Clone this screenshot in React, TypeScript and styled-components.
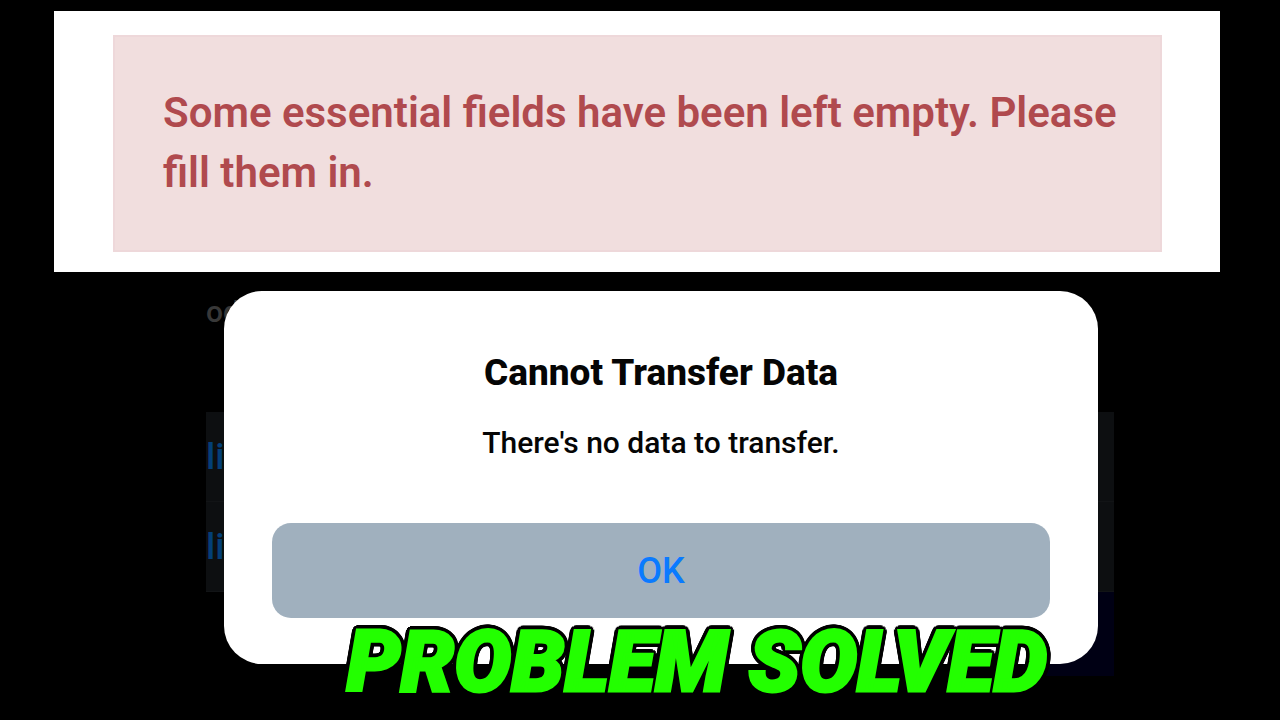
import React from "react";
import styled, { createGlobalStyle } from "styled-components";

const GlobalStyle = createGlobalStyle`
  *, *::before, *::after { box-sizing: border-box; }
  body { margin: 0; background: #000; font-family: Roboto, "Liberation Sans", sans-serif; }
  h1, h2, p { margin: 0; }
`;

const Page = styled.main`
  position: relative;
  min-height: 100vh;
  padding-top: 11px;
  background: #000;
  overflow: hidden;
`;

const Banner = styled.section`
  margin: 0 60px 0 54px;
  padding: 24px 58px 20px 59px;
  background: #fff;
`;

const Alert = styled.p`
  padding: 46px 36px 47px 48px;
  border: 2px solid #eed8da;
  background: #f1dede;
  color: #b04a4e;
  font-size: 42px;
  font-weight: 600;
  line-height: 60px;
`;

const Stage = styled.section`
  display: grid;
  margin: 0 166px 0 206px;
`;

const Backdrop = styled.div`
  grid-area: 1 / 1;
  display: flex;
  flex-direction: column;
  overflow: hidden;
`;

const Heading = styled.p`
  height: 140px;
  padding-top: 20px;
  color: #383838;
  font-size: 30px;
  font-weight: 500;
  line-height: 40px;
`;

const Row = styled.a`
  display: flex;
  align-items: center;
  height: 90px;
  border-bottom: 1px solid #121416;
  background: #0d0f11;
  color: #043f78;
  font-size: 36px;
  font-weight: 500;
  text-decoration: none;
`;

const Footer = styled.div`
  align-self: flex-end;
  width: 10%;
  height: 84px;
  background: #000014;
`;

const Dialog = styled.div`
  grid-area: 1 / 1;
  align-self: start;
  z-index: 1;
  display: flex;
  flex-direction: column;
  margin: 19px 16px 0 18px;
  padding: 60px 48px 46px;
  border-radius: 38px;
  background: #fff;
  color: #050505;
  text-align: center;
`;

const Title = styled.h1`
  font-size: 37px;
  font-weight: 800;
  line-height: 44px;
`;

const Message = styled.p`
  margin-top: 28px;
  font-size: 30px;
  font-weight: 500;
  line-height: 40px;
`;

const OkButton = styled.button`
  height: 95px;
  margin-top: 60px;
  padding: 0;
  border: 0;
  border-radius: 19px;
  background: #a0b0be;
  color: #0a7aff;
  font-family: inherit;
  font-size: 36px;
  font-weight: 500;
`;

const Caption = styled.h2`
  position: absolute;
  top: 612px;
  left: 0;
  right: 0;
  z-index: 2;
  padding-left: 114px;
  color: #23ff00;
  font-size: 85px;
  font-style: italic;
  font-weight: 900;
  line-height: 100px;
  text-align: center;
  white-space: nowrap;
  -webkit-text-stroke: 3px #23ff00;
  text-shadow:
    5px 0 #000, -5px 0 #000, 0 5px #000, 0 -5px #000,
    4px 3px #000, -4px 3px #000, 4px -3px #000, -4px -3px #000,
    3px 4px #000, -3px 4px #000, 3px -4px #000, -3px -4px #000,
    5px 1px #000, -5px 1px #000, 5px -1px #000, -5px -1px #000,
    1px 5px #000, -1px 5px #000, 1px -5px #000, -1px -5px #000;
`;

export default function App() {
  return (
    <Page>
      <GlobalStyle />
      <Banner>
        <Alert role="alert">
          Some essential fields have been left empty. Please fill them in.
        </Alert>
      </Banner>
      <Stage>
        <Backdrop>
          <Heading>od</Heading>
          <Row href="#first">li</Row>
          <Row href="#second">li</Row>
          <Footer />
        </Backdrop>
        <Dialog role="dialog" aria-labelledby="dialog-title">
          <Title id="dialog-title">Cannot Transfer Data</Title>
          <Message>There's no data to transfer.</Message>
          <OkButton type="button">OK</OkButton>
        </Dialog>
      </Stage>
      <Caption>PROBLEM SOLVED</Caption>
    </Page>
  );
}
